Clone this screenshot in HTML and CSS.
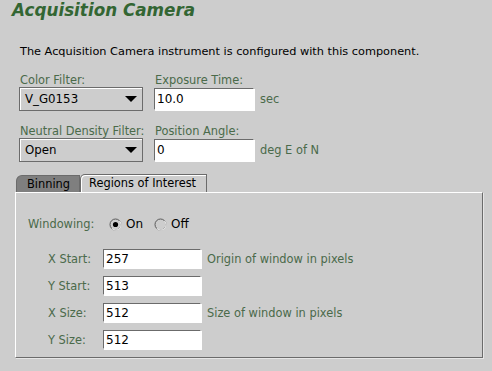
FILE: index.html
```html
<!DOCTYPE html>
<html>
<head>
<meta charset="utf-8">
<link rel="stylesheet" href="styles.css">
</head>
<body>
<div class="page">
  <h1 class="title">Acquisition Camera</h1>
  <p class="desc">The Acquisition Camera instrument is configured with this component.</p>

  <div class="grid">
    <div class="cell col1">
      <div class="lbl">Color Filter:</div>
      <div class="combo"><span>V_G0153</span><svg class="arrow" width="12" height="7" viewBox="0 0 12 7"><polygon points="0,0 12,0 6,6" fill="#000"/></svg></div>
    </div>
    <div class="cell col2">
      <div class="lbl">Exposure Time:</div>
      <div class="fieldrow"><div class="tf wide">10.0</div><span class="unit">sec</span></div>
    </div>
    <div class="cell col1">
      <div class="lbl">Neutral Density Filter:</div>
      <div class="combo"><span>Open</span><svg class="arrow" width="12" height="7" viewBox="0 0 12 7"><polygon points="0,0 12,0 6,6" fill="#000"/></svg></div>
    </div>
    <div class="cell col2">
      <div class="lbl">Position Angle:</div>
      <div class="fieldrow"><div class="tf wide">0</div><span class="unit">deg E of N</span></div>
    </div>
  </div>

  <div class="tabs">
    <div class="tab off">Binning</div>
    <div class="tab on">Regions of Interest</div>
  </div>
  <div class="panel">
    <div class="winrow">
      <span class="wlbl">Windowing:</span>
      <span class="radio"><svg width="13" height="13" viewBox="0 0 13 13"><circle cx="6.5" cy="6.5" r="5.5" fill="#cdcdcd" stroke="#5a5a5a" stroke-width="1"/><path d="M3 10.5 A5 5 0 0 0 10.5 3" fill="none" stroke="#ffffff" stroke-width="1"/><circle cx="6.5" cy="6.5" r="2.6" fill="#000"/></svg>On</span>
      <span class="radio"><svg width="13" height="13" viewBox="0 0 13 13"><circle cx="6.5" cy="6.5" r="5.5" fill="#cdcdcd" stroke="#5a5a5a" stroke-width="1"/><path d="M3 10.5 A5 5 0 0 0 10.5 3" fill="none" stroke="#ffffff" stroke-width="1"/></svg>Off</span>
    </div>
    <div class="rows">
      <div class="row"><span class="rlbl">X Start:</span><div class="tf small">257</div><span class="hint">Origin of window in pixels</span></div>
      <div class="row"><span class="rlbl">Y Start:</span><div class="tf small">513</div></div>
      <div class="row"><span class="rlbl">X Size:</span><div class="tf small">512</div><span class="hint">Size of window in pixels</span></div>
      <div class="row"><span class="rlbl">Y Size:</span><div class="tf small">512</div></div>
    </div>
  </div>
</div>
</body>
</html>
```

FILE: styles.css
```css
html, body {
  margin: 0;
  padding: 0;
  background: #cdcdcd;
}
body {
  font-family: "DejaVu Sans", sans-serif;
  font-size: 12px;
  color: #000;
  width: 492px;
  height: 371px;
  overflow: hidden;
}
.page {
  padding: 0;
}
.title {
  margin: 0;
  padding-left: 12px;
  font-size: 16.8px;
  line-height: 20px;
  font-weight: bold;
  font-style: italic;
  color: #336633;
}
.desc {
  margin: 25px 0 0 20px;
  line-height: 14px;
  font-size: 11.3px;
}
.grid {
  display: grid;
  grid-template-columns: 135px 300px;
  margin: 14px 0 0 19px;
  row-gap: 13px;
}
.lbl {
  color: #4a6a4a;
  line-height: 14px;
  font-size: 11.4px;
  padding-left: 1px;
}
.combo {
  box-sizing: border-box;
  width: 124px;
  height: 24px;
  margin-top: 0;
  border: 1px solid #6b6b6b;
  box-shadow: inset 1px 1px 0 #ffffff;
  display: flex;
  align-items: center;
  justify-content: space-between;
  padding: 0 5px 0 5px;
  font-size: 11.8px;
}
.arrow {
  margin-top: 1px;
}
.fieldrow {
  display: flex;
  align-items: center;
  margin-top: 1px;
}
.tf {
  box-sizing: border-box;
  background: #fff;
  border: 1px solid #6b6b6b;
  border-right-color: #ffffff;
  border-bottom-color: #ffffff;
  box-shadow: 1px 1px 0 #ffffff;
  padding-left: 2px;
  font-size: 12px;
  display: flex;
  align-items: center;
}
.tf.wide {
  width: 100px;
  height: 22px;
}
.unit, .hint {
  color: #4a6a4a;
  font-size: 11.4px;
  margin-left: 6px;
}
.tabs {
  display: flex;
  align-items: flex-end;
  margin: 12px 0 0 16px;
  height: 18px;
}
.tab {
  box-sizing: border-box;
  font-size: 11.4px;
  line-height: 16px;
  border: 1px solid #6b6b6b;
  border-bottom: none;
  border-radius: 5px 0 0 0;
}
.tab.off {
  width: 64px;
  height: 17px;
  background: #7f7f7f;
  padding-left: 10px;
  border-top-left-radius: 6px;
}
.tab.on {
  width: 127px;
  height: 18px;
  background: #cdcdcd;
  padding-left: 8px;
  box-shadow: inset 1px 1px 0 #ffffff;
}
.panel {
  box-sizing: border-box;
  margin-left: 15px;
  width: 468px;
  height: 166px;
  border-top: 1px solid #ffffff;
  border-left: 1px solid #ffffff;
  border-right: 1px solid #6b6b6b;
  border-bottom: 1px solid #6b6b6b;
  box-shadow: 1px 1px 0 #e6e6e6;
  padding: 23px 0 0 12px;
}
.winrow {
  display: flex;
  align-items: center;
  height: 16px;
}
.wlbl {
  color: #4a6a4a;
  font-size: 11.4px;
  width: 81px;
}
.radio {
  display: inline-flex;
  align-items: center;
  margin-right: 11px;
}
.radio svg {
  margin-right: 4px;
}
.rows {
  margin: 17px 0 0 20px;
  display: flex;
  flex-direction: column;
  gap: 8px;
}
.row {
  display: flex;
  align-items: center;
  height: 19px;
}
.rlbl {
  color: #4a6a4a;
  font-size: 11.4px;
  width: 55px;
}
.tf.small {
  width: 98px;
  height: 19px;
}
```
